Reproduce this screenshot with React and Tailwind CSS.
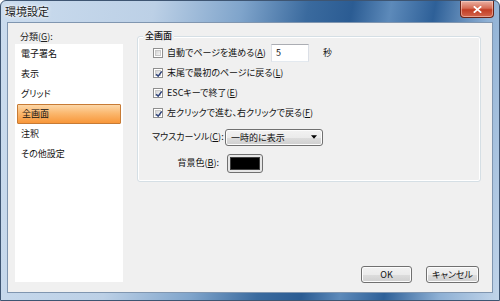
import React from 'react';

const jp = "font-['Meiryo_UI','Noto_Sans_CJK_JP',sans-serif] [font-feature-settings:'palt']";

function CheckBox({ checked }) {
  return (
    <span className="w-[10px] h-[10px] shrink-0 border border-[#8f8f8f] bg-white p-[1px]">
      <span className="relative block w-full h-full bg-[linear-gradient(135deg,#d4d4d4,#f5f5f5)] border border-[#c8c8c8]">
        {checked && (
          <svg viewBox="0 0 10 10" className="absolute -left-[1px] -top-[1px] w-[8px] h-[8px]">
            <path d="M1.5 5.2 L4 7.8 L8.5 1.8" fill="none" stroke="#2a3f7a" strokeWidth="1.8" />
          </svg>
        )}
      </span>
    </span>
  );
}

function CheckRow({ checked, label, labelW = '', children }) {
  return (
    <div className="h-[20px] flex items-center pl-[15px]">
      <CheckBox checked={checked} />
      <span className={`ml-[4px] whitespace-nowrap ${labelW}`}>{label}</span>
      {children}
    </div>
  );
}

function Button({ children, w }) {
  return (
    <button className={`${w} h-[17px] rounded-[3px] border border-[#707070] bg-[linear-gradient(#f2f2f2_0%,#ebebeb_50%,#dddddd_51%,#cfcfcf_100%)] shadow-[inset_0_0_0_1px_#fcfcfc] text-[9px] leading-none text-[#111]`}>
      {children}
    </button>
  );
}

export default function App() {
  const items = ['電子署名', '表示', 'グリッド', '全画面', '注釈', 'その他設定'];
  const selected = '全画面';

  return (
    <div className={`w-[500px] h-[301px] flex flex-col overflow-hidden rounded-t-[6px] border border-[#3e5572] bg-[linear-gradient(100deg,#cbdcee_0%,#bcd0e6_28%,#7fa4cb_44%,#3a6a9e_56%,#2b5c93_64%,#5d8aba_71%,#2e6098_79%,#8eb0d4_89%,#c2d5ea_100%)] text-[9px] text-[#111] ${jp}`}>
      {/* title bar */}
      <div className="h-[21px] flex items-start justify-between pl-[4px] pr-[5px]">
        <span className="mt-[4px] text-[11px] leading-[13px] text-[#1a1a1a] [text-shadow:0_0_5px_#ffffff,0_0_3px_#ffffff]">環境設定</span>
        <div className="w-[34px] h-[17px] rounded-b-[4px] border border-t-0 border-[#6b2418] bg-[linear-gradient(#eab1a3_0%,#d66c55_45%,#c23d24_55%,#d3664d_100%)] shadow-[inset_0_0_0_1px_rgba(255,220,210,0.5)] flex items-center justify-center">
          <svg viewBox="0 0 10 8" className="w-[9px] h-[7px]">
            <path d="M1.5 1 L8.5 7 M8.5 1 L1.5 7" stroke="#ffffff" strokeWidth="2" strokeLinecap="square" />
          </svg>
        </div>
      </div>

      {/* client area */}
      <div className="flex-1 mx-[6px] mb-[7px] border border-[#8096b0] bg-[#f0f0f0] flex">
        {/* category list */}
        <div className="pl-[7px] pt-[7px] w-[115px] shrink-0">
          <div className="h-[14px] leading-[14px] pl-[5px] text-[#222]">分類(<span className="underline">G</span>):</div>
          <div className="w-[108px] h-[238px] bg-white px-[2px]">
            {items.map(item => (
              <div
                key={item}
                className={`h-[20px] flex items-center pl-[4px] ${item === selected ? 'border border-[#c77b35] rounded-[1px] bg-[linear-gradient(#fcd7a8_0%,#fbb86f_45%,#f8973a_100%)] pl-[3px]' : ''}`}
              >
                {item}
              </div>
            ))}
          </div>
        </div>

        {/* settings panel */}
        <div className="flex-1 flex flex-col pl-[14px]">
          <div className="relative mt-[13px] w-[344px] h-[146px] rounded-[3px] border border-[#d5dfe5] shadow-[inset_0_0_0_1px_#ffffff] pt-[6px]">
            <span className="absolute left-[5px] -top-[8px] px-[2px] bg-[#f0f0f0] leading-[14px] font-medium">全画面</span>
            <CheckRow checked={false} labelW="w-[104px]" label={<>自動でページを進める(<span className="underline">A</span>)</>}>
              <div className="w-[38px] h-[18px] border border-[#abadb3] border-b-[#e3e9ef] border-x-[#dbdfe6] bg-white pl-[4px] leading-[16px]">5</div>
              <span className="ml-[14px]">秒</span>
            </CheckRow>
            <CheckRow checked label={<>末尾で最初のページに戻る(<span className="underline">L</span>)</>} />
            <CheckRow checked label={<>ESCキーで終了(<span className="underline">E</span>)</>} />
            <CheckRow checked label={<>左クリックで進む、右クリックで戻る(<span className="underline">F</span>)</>} />

            <div className="mt-[4px] h-[20px] flex items-center pl-[14px]">
              <span className="w-[73px] whitespace-nowrap">マウスカーソル(<span className="underline">C</span>):</span>
              <div className="w-[98px] h-[17px] rounded-[3px] border border-[#707070] bg-[linear-gradient(#f2f2f2_0%,#ebebeb_50%,#dddddd_51%,#cfcfcf_100%)] shadow-[inset_0_0_0_1px_#fcfcfc] flex items-center justify-between pl-[5px] pr-[5px]">
                <span className="leading-none">一時的に表示</span>
                <svg viewBox="0 0 7 4" className="w-[6px] h-[4px]">
                  <path d="M0 0 H7 L3.5 4 Z" fill="#000" />
                </svg>
              </div>
            </div>

            <div className="mt-[6px] h-[20px] flex items-center pl-[14px]">
              <span className="w-[75px] pr-[8px] text-right whitespace-nowrap">背景色(<span className="underline">B</span>):</span>
              <div className="w-[36px] h-[19px] rounded-[3px] border border-[#707070] bg-[#e6e6e6] p-[2px]">
                <div className="w-full h-full bg-black border border-[#404040]" />
              </div>
            </div>
          </div>

          <div className="mt-auto flex justify-end gap-[14px] pr-[13px] pb-[9px]">
            <Button w="w-[51px]">OK</Button>
            <Button w="w-[53px]">キャンセル</Button>
          </div>
        </div>
      </div>
    </div>
  );
}
